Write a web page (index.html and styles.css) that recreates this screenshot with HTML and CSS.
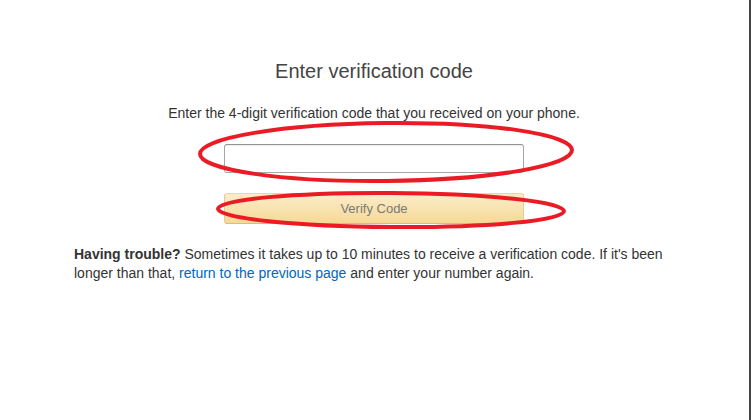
FILE: index.html
```html
<!DOCTYPE html>
<html lang="en">
  <head>
    <meta charset="UTF-8" />
    <meta name="viewport" content="width=device-width, initial-scale=1.0" />
    <title>Enter verification code</title>
    <link rel="stylesheet" href="styles.css">
  </head>
  <body>
    <div class="page">
      <div class="content">
        <h1 class="title">Enter verification code</h1>
        <p class="hint">Enter the 4-digit verification code that you received on your phone.</p>
        <form class="code-form" onsubmit="return false">
          <input class="code-input" type="text" maxlength="4" />
          <button class="verify-btn" type="submit" disabled>Verify Code</button>
        </form>
        <p class="trouble">
          <b>Having trouble?</b> Sometimes it takes up to 10 minutes to receive a verification code. If it's been
          longer than that, <a href="#">return to the previous page</a> and enter your number again.
        </p>
      </div>

      <!-- red marker circles drawn over the screenshot -->
      <svg class="marks" width="749" height="420" viewBox="0 0 749 420">
        <ellipse cx="386" cy="152" rx="186" ry="29" transform="rotate(-0.6 386 152)" />
        <ellipse cx="391" cy="210" rx="173" ry="17" transform="rotate(0.4 391 210)" />
      </svg>
    </div>
  </body>
</html>
```

FILE: styles.css
```css
* {
  margin: 0;
  padding: 0;
  box-sizing: border-box;
}

body {
  background: #fff;
  font-family: "Liberation Sans", Arial, sans-serif;
  color: #333;
}

.page {
  position: relative;
  width: 751px;
  height: 420px;
  padding-left: 74px;
  border-right: 2px solid #444;
}

.content {
  width: 600px;
  padding-top: 59px;
}

.title {
  font-size: 20px;
  font-weight: normal;
  line-height: 24px;
  color: #444;
  text-align: center;
}

.hint {
  margin-top: 21px;
  font-size: 14px;
  line-height: 19px;
  text-align: center;
}

.code-form {
  display: flex;
  flex-direction: column;
  align-items: center;
  gap: 20px;
  margin-top: 21px;
}

.code-input {
  width: 300px;
  height: 29px;
  border: 1px solid #a6a6a6;
  border-top-color: #949494;
  border-radius: 3px;
  box-shadow: 0 1px 0 rgba(255, 255, 255, 0.5), inset 0 1px 0 rgba(0, 0, 0, 0.07);
  font-size: 13px;
  padding: 3px 7px;
  outline: none;
}

.verify-btn {
  width: 300px;
  height: 31px;
  border: 1px solid #e3cf9d;
  border-color: #e8d6a7 #e3cc96 #d9bd78;
  border-radius: 3px;
  background: linear-gradient(to bottom, #fbeccb, #f5d995);
  font-family: inherit;
  font-size: 13px;
  color: #7a7a7a;
}

.trouble {
  margin-top: 21px;
  font-size: 14px;
  line-height: 19px;
}

.trouble b {
  font-weight: bold;
}

.trouble a {
  color: #0066c0;
  text-decoration: none;
}

.marks {
  position: absolute;
  top: 0;
  left: 0;
  pointer-events: none;
}

.marks ellipse {
  fill: none;
  stroke: #ea1b24;
  stroke-width: 4;
}
```
